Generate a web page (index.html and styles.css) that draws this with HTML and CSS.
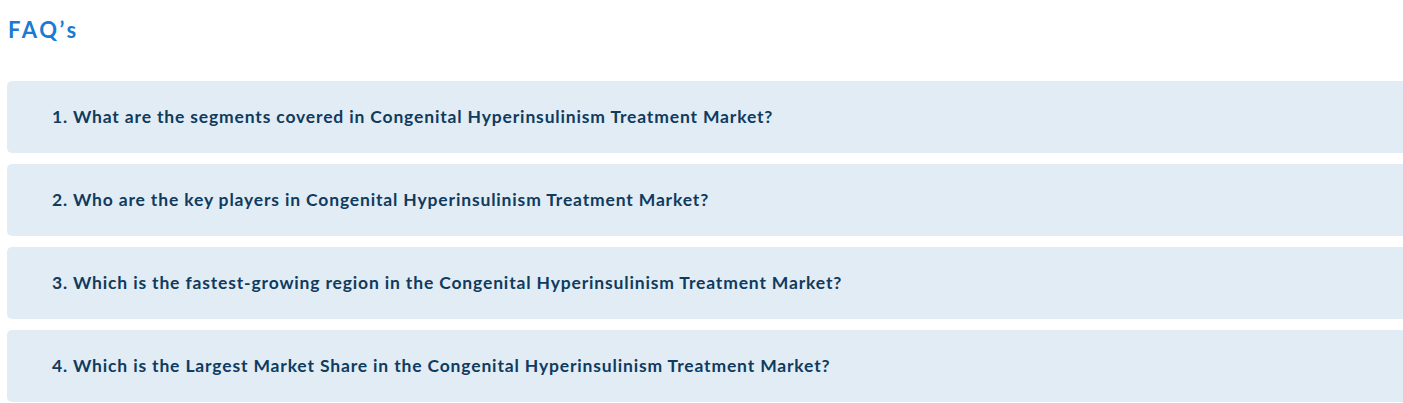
FILE: index.html
```html
<!DOCTYPE html>
<html lang="en">
<head>
<meta charset="utf-8">
<link rel="stylesheet" href="styles.css">
</head>
<body>
<section class="faq">
  <h2 class="faq-title">FAQ’s</h2>
  <div class="faq-list">
    <div class="faq-item"><span class="faq-q">1. What are the segments covered in Congenital Hyperinsulinism Treatment Market?</span></div>
    <div class="faq-item"><span class="faq-q">2. Who are the key players in Congenital Hyperinsulinism Treatment Market?</span></div>
    <div class="faq-item"><span class="faq-q">3. Which is the fastest-growing region in the Congenital Hyperinsulinism Treatment Market?</span></div>
    <div class="faq-item"><span class="faq-q">4. Which is the Largest Market Share in the Congenital Hyperinsulinism Treatment Market?</span></div>
  </div>
</section>
</body>
</html>
```
FILE: styles.css
```css
html, body {
  margin: 0;
  padding: 0;
  overflow: hidden;
  background: #fff;
}
.faq {
  padding: 14px 0 0 7px;
  font-family: Lato, "Open Sans", sans-serif;
}
.faq-title {
  margin: 0 0 0 1px;
  font-size: 22px;
  line-height: 32px;
  font-weight: 700;
  letter-spacing: 2.6px;
  color: #1b7ad3;
}
.faq-list {
  margin-top: 35px;
  display: flex;
  flex-direction: column;
  gap: 11px;
  width: 1420px;
}
.faq-item {
  height: 72px;
  background: #e2ecf5;
  border-radius: 5px;
  display: flex;
  align-items: center;
  padding-left: 45px;
}
.faq-q {
  font-size: 17.5px;
  font-weight: 700;
  color: #0f3b5e;
  letter-spacing: 0.84px;
  margin-top: -2px;
}
```
